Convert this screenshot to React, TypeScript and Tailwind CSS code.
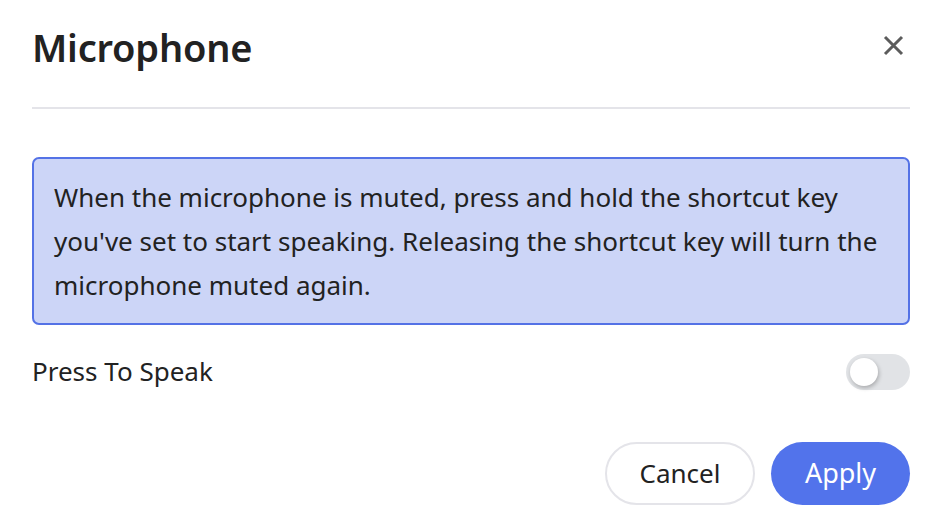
import React, { useState } from 'react';

const App: React.FC = () => {
  const [enabled, setEnabled] = useState(false);

  return (
    <div className="w-[931px] h-[527px] bg-white pl-8 pr-[21px] text-[#222222] font-['Noto_Sans',sans-serif] overflow-hidden">
      {/* Header */}
      <div className="flex items-center justify-between h-[107px] pb-[12px]">
        <h1 className="text-[38px] font-semibold tracking-[-0.2px]">Microphone</h1>
        <button className="mr-[6px] -mt-[5px] text-[#5c5c5c]">
          <svg width="21" height="21" viewBox="0 0 21 21" fill="none" stroke="currentColor" strokeWidth="3">
            <path d="M2 2 L19 19 M19 2 L2 19" />
          </svg>
        </button>
      </div>
      <div className="h-[2px] bg-[#e4e4e9]" />

      {/* Info */}
      <div className="mt-[48px] rounded-[7px] border-2 border-[#5472e6] bg-[#ccd5f7] px-[20px] pt-[16px] pb-[16px] text-[26px] leading-[44px]">
        When the microphone is muted, press and hold the shortcut key you've set to start speaking. Releasing the shortcut key will turn the microphone muted again.
      </div>

      {/* Toggle row */}
      <div className="mt-[27px] flex items-center justify-between">
        <span className="text-[26px]">Press To Speak</span>
        <button
          onClick={() => setEnabled(!enabled)}
          className={`relative w-[64px] h-[36px] rounded-full transition-colors ${enabled ? 'bg-[#5273eb]' : 'bg-[#e1e3e6]'}`}
        >
          <span
            className={`absolute top-[4px] w-[28px] h-[28px] rounded-full bg-white shadow-[1px_2px_4px_rgba(0,0,0,0.25)] transition-all ${enabled ? 'left-[32px]' : 'left-[4px]'}`}
          />
        </button>
      </div>

      {/* Actions */}
      <div className="mt-[51px] flex justify-end gap-4">
        <button className="w-[150px] h-[63px] rounded-full border-2 border-[#e4e4e9] bg-white text-[26px] text-[#222222]">
          Cancel
        </button>
        <button className="w-[139px] h-[63px] rounded-full bg-[#5273eb] text-[27px] text-white">
          Apply
        </button>
      </div>
    </div>
  );
};

export default App;
